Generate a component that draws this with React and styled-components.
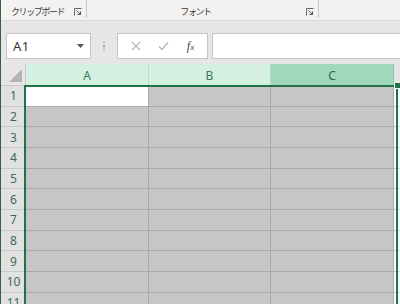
import React from 'react'
import styled, { createGlobalStyle } from 'styled-components'

const GlobalStyle = createGlobalStyle`
  html, body {
    margin: 0;
    padding: 0;
    width: 400px;
    height: 304px;
    overflow: hidden;
    background: #e6e6e6;
  }
  * { box-sizing: border-box; }
`

const WindowSC = styled.div`
  display: flex;
  flex-direction: column;
  width: 400px;
  height: 304px;
  border-left: 1px solid #35614c;
  font-family: "Noto Sans", "Noto Sans CJK JP", sans-serif;
  overflow: hidden;
`

const RibbonSC = styled.div`
  display: flex;
  height: 21px;
  background: #f3f2f1;
  border-bottom: 1px solid #dadada;
  box-shadow: 0 1px 2px rgba(0,0,0,0.08);
  flex-shrink: 0;
`

const GroupSC = styled.div`
  display: flex;
  align-items: flex-end;
  width: ${p => p.width}px;
  height: 18px;
  padding: 0 4px 2px ${p => p.padLeft}px;
  border-right: 1px solid #c8c6c4;
  font-family: "Noto Sans CJK JP", sans-serif;
  font-size: 9px;
  color: #3b3b3b;
  line-height: 1;
  white-space: nowrap;
`

const GroupLabelSC = styled.span`
  flex: 1;
  text-align: ${p => p.align};
  padding-right: ${p => p.padRight || 0}px;
  letter-spacing: -1.4px;
`

const Launcher = () => (
  <svg width="8" height="8" viewBox="0 0 8 8">
    <path d="M0.5 7.5V0.5H7.5" fill="none" stroke="#666" strokeWidth="1" />
    <path d="M2.5 2.5L6.5 6.5M6.5 3.5V6.5H3.5" fill="none" stroke="#555" strokeWidth="1" />
  </svg>
)

const FormulaBarSC = styled.div`
  display: flex;
  align-items: center;
  height: 42px;
  padding: 8px 0 0 5px;
  background: #e6e6e6;
  flex-shrink: 0;
`

const NameBoxSC = styled.div`
  display: flex;
  align-items: center;
  justify-content: space-between;
  width: 85px;
  height: 26px;
  padding: 0 6px 0 6px;
  background: #fff;
  border: 1px solid #c6c6c6;
  font-family: "Noto Sans", sans-serif;
  font-size: 13px;
  letter-spacing: 0.5px;
  color: #333;
`

const DotsSC = styled.div`
  display: flex;
  flex-direction: column;
  gap: 2px;
  width: 26px;
  align-items: center;
  & span {
    width: 1.5px;
    height: 1.5px;
    background: #999;
  }
`

const FxBoxSC = styled.div`
  display: flex;
  align-items: center;
  justify-content: space-around;
  width: 91px;
  height: 26px;
  padding: 0 4px;
  background: #fff;
  border: 1px solid #c6c6c6;
`

const FxSC = styled.span`
  font-family: "Liberation Serif", serif;
  font-style: italic;
  font-size: 12px;
  color: #444;
  & small { font-size: 9px; }
`

const InputSC = styled.div`
  flex: 1;
  height: 26px;
  margin-left: 4px;
  background: #fff;
  border: 1px solid #c6c6c6;
  border-right: none;
`

const SheetSC = styled.div`
  position: relative;
  flex: 1;
  display: grid;
  grid-template-columns: 25px 123px 122px 123px 1fr;
  grid-template-rows: 22px;
  grid-auto-rows: 20.67px;
  margin-top: 1px;
  background: #e6e6e6;
`

const CornerSC = styled.div`
  position: relative;
  background: #e6e6e6;
  border-right: 1px solid #c9c9c9;
  border-bottom: 1px solid #c9c9c9;
  &::after {
    content: '';
    position: absolute;
    right: 3px;
    bottom: 3px;
    width: 0;
    height: 0;
    border-left: 13px solid transparent;
    border-bottom: 13px solid #b4b4b4;
  }
`

const ColHeadSC = styled.div`
  display: flex;
  align-items: center;
  justify-content: center;
  background: ${p => (p.active ? '#a0d8b9' : '#d3f0e0')};
  border-right: 1px solid ${p => (p.active ? '#8cc7a6' : '#b7dfc8')};
  font-size: 12px;
  color: ${p => (p.active ? '#2a6b4a' : '#3b7a5a')};
`

const ColRestSC = styled.div`
  background: #e6e6e6;
`

const RowHeadSC = styled.div`
  display: flex;
  align-items: center;
  justify-content: center;
  background: #e1e1e1;
  border-bottom: 1px solid #c9c9c9;
  font-size: 12px;
  color: #3d6a55;
`

const CellSC = styled.div`
  background: ${p => (p.active ? '#fff' : '#c6c6c6')};
  border-right: 1px solid #a9a9a9;
  border-bottom: 1px solid #a9a9a9;
`

const RestCellSC = styled.div`
  background: #fafafa;
  border-bottom: 1px solid #d4d4d4;
`

const SelectionSC = styled.div`
  position: absolute;
  left: 23px;
  top: 21px;
  width: 374px;
  bottom: -4px;
  border: 2px solid #217346;
  pointer-events: none;
`

const HandleSC = styled.div`
  position: absolute;
  right: -4px;
  top: -4px;
  width: 6px;
  height: 6px;
  background: #217346;
  border: 1px solid #fff;
  border-top: none;
  border-right: none;
`

const rows = Array.from({ length: 11 }, (_, i) => i + 1)

export default function App() {
  return (
    <>
      <GlobalStyle />
      <WindowSC>
        <RibbonSC>
          <GroupSC width={86} padLeft={10}>
            <GroupLabelSC align="left">クリップボード</GroupLabelSC>
            <Launcher />
          </GroupSC>
          <GroupSC width={232} padLeft={4}>
            <GroupLabelSC align="center" padRight={6}>フォント</GroupLabelSC>
            <Launcher />
          </GroupSC>
        </RibbonSC>

        <FormulaBarSC>
          <NameBoxSC>
            <span>A1</span>
            <svg width="7" height="4" viewBox="0 0 7 4">
              <path d="M0 0H7L3.5 4Z" fill="#555" />
            </svg>
          </NameBoxSC>
          <DotsSC>
            <span /><span /><span />
          </DotsSC>
          <FxBoxSC>
            <svg width="10" height="10" viewBox="0 0 10 10">
              <path d="M1 1L9 9M9 1L1 9" stroke="#b5b5b5" strokeWidth="1.2" />
            </svg>
            <svg width="11" height="10" viewBox="0 0 11 10">
              <path d="M1 5.5L4 8.5L10 1.5" fill="none" stroke="#b5b5b5" strokeWidth="1.3" />
            </svg>
            <FxSC>f<small>x</small></FxSC>
          </FxBoxSC>
          <InputSC />
        </FormulaBarSC>

        <SheetSC>
          <CornerSC />
          <ColHeadSC>A</ColHeadSC>
          <ColHeadSC>B</ColHeadSC>
          <ColHeadSC active>C</ColHeadSC>
          <ColRestSC />
          {rows.map(r => (
            <React.Fragment key={r}>
              <RowHeadSC>{r}</RowHeadSC>
              <CellSC active={r === 1} />
              <CellSC />
              <CellSC />
              <RestCellSC />
            </React.Fragment>
          ))}
          <SelectionSC>
            <HandleSC />
          </SelectionSC>
        </SheetSC>
      </WindowSC>
    </>
  )
}
